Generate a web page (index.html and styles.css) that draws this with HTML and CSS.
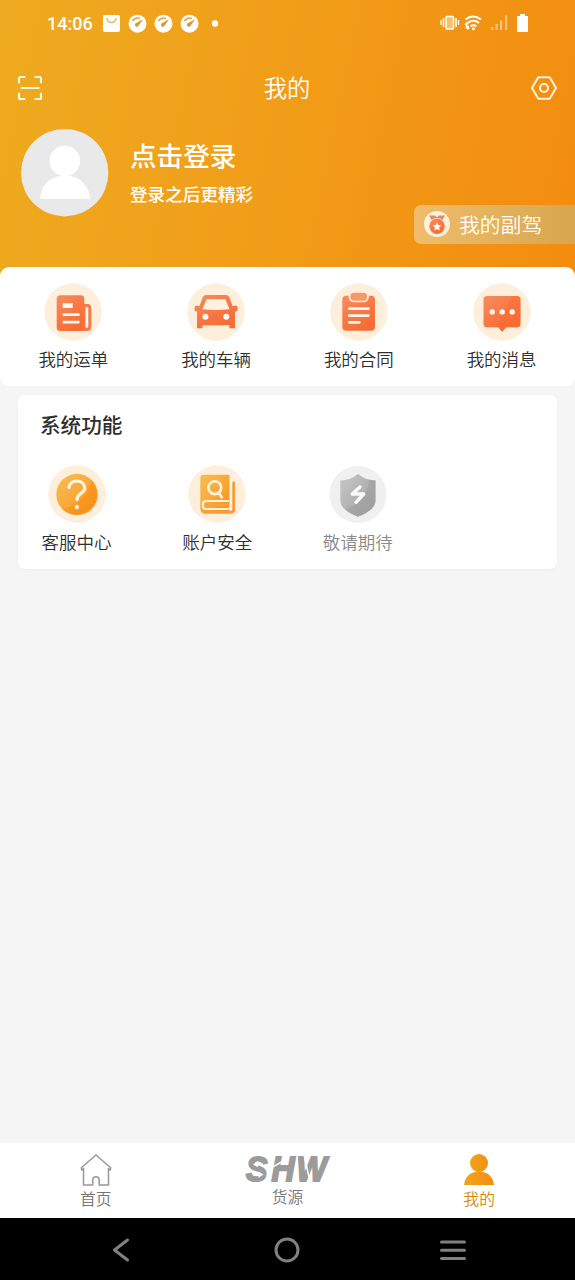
FILE: index.html
```html
<!DOCTYPE html>
<html lang="zh-CN">
<head>
<meta charset="utf-8">
<meta name="viewport" content="width=device-width">
<title>我的</title>
<link rel="stylesheet" href="styles.css">
</head>
<body>
<svg class="defs" width="0" height="0" aria-hidden="true">
  <defs>
    <linearGradient id="orange" x1="0" y1="0" x2="0.6" y2="1"><stop offset="0" stop-color="#f58e5d"/><stop offset=".5" stop-color="#f97a48"/><stop offset="1" stop-color="#f56c35"/></linearGradient>
    <linearGradient id="amber" x1="0" y1="0" x2="1" y2="1"><stop offset="0" stop-color="#f8bd55"/><stop offset=".5" stop-color="#f9a93a"/><stop offset="1" stop-color="#f98d16"/></linearGradient>
    <linearGradient id="gray" x1="0" y1="0" x2="1" y2="1"><stop offset="0" stop-color="#c8c8c8"/><stop offset="1" stop-color="#9f9f9f"/></linearGradient>
    <linearGradient id="user" x1="0" y1="0" x2="1" y2="0"><stop offset="0" stop-color="#efa51e"/><stop offset="1" stop-color="#f48e10"/></linearGradient>
  </defs>
</svg>
<div class="screen">
  <header class="hero">
    <div class="status">
      <span class="clock">14:06</span>
      <svg class="notices" width="120" height="20" viewBox="0 0 120 20">
        <rect x="1" y="1" width="17" height="17" rx="2" fill="#fff"/>
        <path d="M5 4a4.5 4.5 0 0 0 9 0" fill="none" stroke="#e8b65c" stroke-width="1.6"/>
        <g id="gauge"><circle cx="35.5" cy="9.700" r="9" fill="#fff"/><path d="M30.500 7a6.500 6.500 0 0 1 7.500-2.500" fill="none" stroke="#e0a74a" stroke-width="1.500"/><path d="M41 5.200 36.800 11.500a2 2 0 1 1-2.600-2.600z" fill="#d99a35"/></g>
        <use href="#gauge" x="26"/><use href="#gauge" x="52"/>
        <circle cx="113" cy="9.500" r="3.200" fill="#fff"/>
      </svg>
      <svg class="signals" width="90" height="22" viewBox="0 0 90 22">
        <g fill="none" stroke="#fff">
          <rect x="6" y="3.500" width="7.500" height="12.500" rx="1" fill="#f8c06c" stroke-width="1.500"/>
          <path d="M3.500 5v9M16 5v9" stroke-width="1.600"/><path d="M1 7v5M18.500 7v5" stroke-width="1.300"/>
          <path d="M25.500 6.500q7.500-6 15.500 0M27.500 10q5.800-4.500 11.500 0M30.500 13.400q3-2.200 6 0" stroke-width="2"/>
        </g>
        <circle cx="33.400" cy="15.700" r="1.500" fill="#fff"/>
        <path d="m26.500 9 2 2.500h-1.200v4h-1.600v-4h-1.200zM28 17l-2-2.200h1.200v-2h1.600v2h1.200z" fill="#fff"/>
        <path d="M51 14h2.200v3H51zM55.500 11h2.200v6h-2.200zM60 7.500h2.200V17H60zM65 2.500h2.200V17H65z" fill="#fac37a"/>
        <path d="M77 3h3V1h5v2h3v16H77z" fill="#fff"/>
      </svg>
    </div>
    <div class="titlebar">
      <svg width="26" height="26" viewBox="0 0 26 26" fill="none" stroke="#fff8e8" stroke-width="2.200" stroke-linecap="round" stroke-linejoin="round"><path d="M2 7.500V3.500Q2 2 3.500 2h4M18.500 2h4Q24 2 24 3.500v4M24 18.500v4q0 1.500-1.500 1.500h-4M7.500 24h-4Q2 24 2 22.500v-4M4.500 13h17"/></svg>
      <h1>我的</h1>
      <svg width="26" height="26" viewBox="0 0 26 26" fill="none" stroke="#fff4df" stroke-width="2" stroke-linejoin="round"><path d="M7.300 2.200h11.400L25 13l-6.300 10.800H7.300L1 13z"/><circle cx="13" cy="13" r="4"/></svg>
    </div>
    <div class="profile">
      <svg width="88" height="89" viewBox="0 0 88 89"><circle cx="43.700" cy="44.700" r="43.700" fill="#e9e9e9"/><circle cx="43.800" cy="33" r="15.300" fill="#fff"/><path d="M19 71c.5-14 11-23.500 25-23.500S68.500 57 69 71z" fill="#fff"/></svg>
      <div class="login"><h2>点击登录</h2><p>登录之后更精彩</p></div>
    </div>
    <div class="copilot">
      <svg width="26" height="26" viewBox="0 0 26 26"><circle cx="13" cy="13" r="13" fill="#fdf0df"/><path d="M5 4.500h6l2 2 2-2h6L18.500 9h-11z" fill="#e58a5b"/><circle cx="13" cy="15.300" r="8.300" fill="#fdf0df"/><circle cx="13" cy="15.300" r="7.700" fill="url(#orange)"/><path d="m13 11.300 1.300 2.700 3 .4-2.200 2.100.5 3-2.600-1.400-2.600 1.400.5-3-2.200-2.100 3-.4z" fill="#fff"/></svg>
      <span>我的副驾</span>
    </div>
  </header>

  <main class="content">
    <section class="shortcuts">
      <a class="entry"><svg width="58" height="58" viewBox="0 0 58 58"><circle cx="29" cy="29" r="28.700" fill="#fdefdb"/>
        <path d="M39 21h4.500q3.800 0 3.800 4v19q0 4-4 4H38z" fill="#f47c4a"/><rect x="12.700" y="12.300" width="27.600" height="35.700" rx="3.500" fill="url(#orange)"/><path d="M41.500 24.300h2q.8 0 .8.800v18.700q0 1-1.200 1h-1.600z" fill="#fff5e8"/><path d="M18.700 20.300h10v4.800h-10zM18.700 30.200h16.800v2.900H18.700zM18.700 37.700h16.800v2.900H18.700z" fill="#fffaf1"/></svg><span>我的运单</span></a>
      <a class="entry"><svg width="58" height="58" viewBox="0 0 58 58"><circle cx="29" cy="29" r="28.700" fill="#fdefdb"/>
        <path d="M19.500 12h19.200q3 0 4 3l3 8.200 2.400-.6q2.500-.4 2.500 2.500v2q0 1.500-2.600 1.500v16.700h-5.500v-3h-27v3h-5.500V28.600q-2.500 0-2.500-1.500v-2q0-2.800 2.500-2.500l2.400.6 3-8.200q1-3 4.100-3z" fill="url(#orange)"/><path d="M19.500 16.300h19l4 10q-13.500 1.200-27 0z" fill="#fff0df"/><circle cx="18.400" cy="33.800" r="3" fill="#fffaf1"/><circle cx="39.300" cy="33.800" r="3" fill="#fffaf1"/></svg><span>我的车辆</span></a>
      <a class="entry"><svg width="58" height="58" viewBox="0 0 58 58"><circle cx="29" cy="29" r="28.700" fill="#fdefdb"/>
        <rect x="12.300" y="12.800" width="32.700" height="35" rx="4" fill="url(#orange)"/><rect x="19.500" y="8.800" width="18.500" height="9.700" rx="4.500" fill="#f69a65" stroke="#fff1e1" stroke-width="1.700"/><path d="M19.300 25.700h19M19.300 32.600h19M19.300 39.300h10" stroke="#fff8ee" stroke-width="2.800" stroke-linecap="round"/></svg><span>我的合同</span></a>
      <a class="entry"><svg width="58" height="58" viewBox="0 0 58 58"><circle cx="29" cy="29" r="28.700" fill="#fdefdb"/>
        <path d="M14 13h30q3.500 0 3.500 3.500v24.300q0 3.500-3.500 3.500H33.300l-4.100 4.700-4.100-4.700H14q-3.500 0-3.500-3.500V16.500Q10.500 13 14 13z" fill="url(#orange)"/><path d="M39 13h5q3.500 0 3.500 3.500v24.300q0 3.500-3.500 3.500H22z" fill="#fb672b" opacity=".35"/><g fill="#fff7ea"><circle cx="19.200" cy="28.900" r="2.700"/><circle cx="29.200" cy="28.900" r="2.700"/><circle cx="39.200" cy="28.900" r="2.700"/></g></svg><span>我的消息</span></a>
    </section>

    <section class="system">
      <h3>系统功能</h3>
      <div class="functions">
        <a class="entry"><svg width="58" height="58" viewBox="0 0 58 58"><circle cx="29" cy="29" r="28.700" fill="#fdefdb"/><circle cx="29" cy="29.500" r="20.700" fill="url(#amber)"/><path d="M43.600 14.900a20.700 20.700 0 0 1-29.200 29.200Q38 39 43.600 14.900z" fill="#f98a0d" opacity=".45"/><path d="M21 22.500c.4-4 3.600-6.300 7.700-6.300 4.500 0 8 2.700 8 6.700 0 5.400-7.700 5.400-7.700 11.600" fill="none" stroke="#fff3dd" stroke-width="3.300" stroke-linecap="round"/><circle cx="28.900" cy="42" r="2.200" fill="#fff3dd"/></svg><span>客服中心</span></a>
        <a class="entry"><svg width="58" height="58" viewBox="0 0 58 58"><circle cx="29" cy="29" r="28.700" fill="#fdefdb"/><path d="M15.500 9.800h26v38.700H17q-4.700 0-4.700-4.700V13q0-3.200 3.200-3.200z" fill="url(#amber)"/><path d="M45.700 18v26.500q0 2.600-2.600 2.600H17" fill="none" stroke="#f89c35" stroke-width="2.800" stroke-linecap="round"/><path d="M42.900 13v25.500q0 5.500-3 5.500H18q-3 0-3-2.700v-2.600q0-2.700 3-2.700h23" fill="none" stroke="#fff3dd" stroke-width="2"/><path d="M17.500 40h22.500" stroke="#f8a43c" stroke-width="2" stroke-linecap="round"/><circle cx="26.800" cy="22.700" r="6.400" fill="none" stroke="#fff3dd" stroke-width="2.600"/><path d="m30.800 28 2.900 4.200" stroke="#fff3dd" stroke-width="2.800" stroke-linecap="round"/></svg><span>账户安全</span></a>
        <a class="entry disabled"><svg width="58" height="58" viewBox="0 0 58 58"><circle cx="29" cy="29.500" r="28.500" fill="#f0f0f0"/><path d="M29 9q7.500 6 17.500 6.500v20Q46.500 45 29 51.700 11.300 45 11.300 35.500v-20Q21.500 15 29 9z" fill="url(#gray)"/><path d="M46.500 15.500v20Q46.500 45 29 51.700 20 48 16 44q22-6 24-29.500z" fill="#989898" opacity=".45"/><path d="m31 22-7.700 7h11.400l-7.700 8.300" fill="none" stroke="#fafafa" stroke-width="3.400" stroke-linejoin="round" stroke-linecap="round"/></svg><span>敬请期待</span></a>
      </div>
    </section>
  </main>

  <nav class="tabs">
    <a><svg width="34" height="34" viewBox="0 0 34 34" fill="none" stroke="#979797" stroke-width="1.500" stroke-linejoin="round"><path d="M4.500 15.500 2.800 17 2.300 14.800 17 2l14.700 12.800-.5 2.200-1.700-1.500V32H20.200v-5a3.200 3.200 0 0 0-6.400 0v5H4.500z"/></svg><span>首页</span></a>
    <a class="cargo"><svg class="logo" width="84" height="30" viewBox="0 0 84 30"><g transform="translate(0 27.200) scale(1 1.080)"><text class="brand" x="1 26.500 51.500" y="-.8">SHW</text></g><path d="M8 9.500l5-3.500v2.300h5v2h-5v2zM18.500 19.500l-5 3.500v-2.300H9v-2h4.500v-2.200zM28 11l12-7 .5 1.500-12 7zM60 0l6 28h-1.500L58.300 0z" fill="#fff"/></svg><span>货源</span></a>
    <a class="active"><svg width="34" height="34" viewBox="0 0 34 34"><circle cx="17" cy="10" r="9" fill="url(#user)"/><path d="M2 32c.8-8.500 6.800-13.500 15-13.500s14.200 5 15 13.500z" fill="url(#user)"/></svg><span>我的</span></a>
  </nav>
  <footer class="android">
    <svg width="26" height="26" viewBox="0 0 26 26"><path d="M18.500 3 5.500 13l13 10" /></svg>
    <svg width="26" height="26" viewBox="0 0 26 26"><circle cx="13" cy="13" r="11"/></svg>
    <svg width="28" height="26" viewBox="0 0 28 26"><path d="M2.500 5h23M2.500 13.300h23M2.500 21.500h23"/></svg>
  </footer>
</div>
</body>
</html>
```
FILE: styles.css
```css
* { box-sizing: border-box; }
body { margin: 0; font-family: Roboto, "Noto Sans CJK SC", sans-serif; font-weight: 350; color: #2e2e2e; }
h1, h2, h3, p { margin: 0; }
svg { display: block; flex: none; }
.defs { position: absolute; }
.screen { width: 575px; height: 1280px; display: flex; flex-direction: column; background: #f5f5f5; overflow: hidden; }

.hero { position: relative; height: 282px; flex: none; background: linear-gradient(102deg, #eeab20 0%, #f19d18 48%, #f38c0f 100%); color: #fff; }
.status { height: 48px; display: flex; align-items: center; padding: 0 45px 0 47px; }
.clock { width: 45px; font-size: 18px; font-weight: 500; line-height: 20px; }
.notices { margin-left: 10px; }
.signals { margin-left: auto; }
.titlebar { height: 80px; display: flex; align-items: center; justify-content: space-between; padding: 0 18px 0 17px; }
.titlebar h1 { font-size: 23.3px; font-weight: 350; line-height: 34px; padding-top: 2px; }
.profile { display: flex; gap: 21px; padding-left: 21px; }
.login { padding-top: 9px; }
.login h2 { font-size: 26.6px; line-height: 40px; font-weight: 500; }
.login p { font-size: 17.6px; line-height: 28px; font-weight: 500; margin-top: 4px; }
.copilot { position: absolute; right: 0; top: 205px; width: 161px; height: 39px; display: flex; align-items: center; gap: 9px; padding-left: 10px; border-radius: 7px 0 0 7px; background: linear-gradient(90deg, #efbd6c, #e4b15c 50%, #d6a74d); font-size: 20.8px; line-height: 30px; }
.copilot svg { margin-top: -2px; }
.copilot span { padding-top: 2px; }

.content { flex: 1; position: relative; margin-top: -15px; }
.shortcuts { height: 119px; display: grid; grid-template-columns: repeat(4, 1fr); padding: 16px 2px 0; background: #fff; border-radius: 9px; }
.entry { display: flex; flex-direction: column; align-items: center; font-size: 17.5px; line-height: 26px; white-space: nowrap; }
.entry span { margin-top: 6px; }
.system { margin: 9px 18px 0; height: 174px; background: #fff; border-radius: 7px; padding-left: 22px; box-shadow: 0 1px 2px #ececec; }
.system h3 { font-size: 20.6px; line-height: 30px; padding-top: 16px; font-weight: 500; }
.functions { display: flex; gap: 70.6px; margin-top: 24px; padding-left: 1.6px; }
.functions .entry { width: 70px; }
.functions .entry span { margin-top: 7px; }
.disabled { color: #8a8a8a; }

.tabs { height: 75px; flex: none; display: grid; grid-template-columns: repeat(3, 1fr); background: #fff; }
.tabs a { display: flex; flex-direction: column; align-items: center; padding-top: 10px; font-size: 15.8px; line-height: 22px; color: #757575; }
.tabs span { margin-top: 2px; }
.tabs .cargo { padding-top: 12px; }
.tabs .active { color: #d5880e; }
.logo { overflow: visible; }
.brand { font: italic 900 32px "Liberation Sans", sans-serif; fill: #9b9b9b; stroke: #9b9b9b; stroke-width: 1.8px; }
.android { height: 62px; flex: none; display: flex; align-items: center; justify-content: space-between; padding: 1px 108px 0 109px; background: #000; }
.android svg { fill: none; stroke: #818181; stroke-width: 3; stroke-linecap: round; stroke-linejoin: round; }
```
